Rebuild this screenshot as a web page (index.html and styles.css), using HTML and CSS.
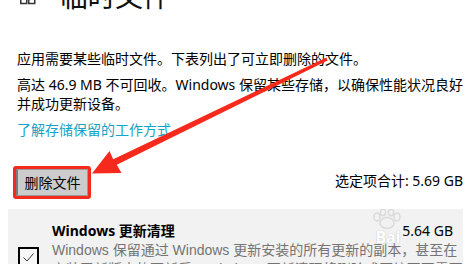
FILE: index.html
```html
<!DOCTYPE html>
<html lang="zh-CN">
<head>
<meta charset="utf-8">
<title>临时文件</title>
<link rel="stylesheet" href="styles.css">
</head>
<body>
<div class="page">
  <div class="header">
    <svg class="hicon" width="16" height="10" viewBox="0 0 16 10"><rect x="0.75" y="-4" width="6" height="7.5" fill="none" stroke="#333" stroke-width="1.5"/><rect x="8.75" y="-4" width="6" height="7.5" fill="none" stroke="#333" stroke-width="1.5"/></svg>
    <h1 class="title">临时文件</h1>
  </div>
  <p class="text t1">应用需要某些临时文件。下表列出了可立即删除的文件。</p>
  <p class="text t2">高达 46.9 MB 不可回收。Windows 保留某些存储，以确保性能状况良好并成功更新设备。</p>
  <a class="link">了解存储保留的工作方式</a>
  <div class="actions">
    <div class="btn-frame"><button class="btn">删除文件</button></div>
    <div class="total">选定项合计: 5.69 GB</div>
  </div>
  <div class="panel">
    <div class="check"><svg width="17" height="17" viewBox="0 0 17 17"><path d="M3.5 8.5 L7 12 L13.5 4.5" fill="none" stroke="#333" stroke-width="1"/></svg></div>
    <div class="item">
      <div class="item-head"><span class="item-title">Windows 更新清理</span><span class="item-size">5.64 GB</span></div>
      <div class="item-desc">Windows 保留通过 Windows 更新安装的所有更新的副本，甚至在安装了新版本的更新后。Windows 更新清理将删除或压缩不再需要的旧版本更新。</div>
    </div>
    <div class="watermark">
      <svg width="50" height="22" viewBox="0 0 50 22"><g fill="none" stroke="#dadada" stroke-width="1.5"><ellipse cx="24" cy="14" rx="7" ry="5.5"/><ellipse cx="14" cy="8" rx="3" ry="4"/><ellipse cx="20" cy="3.5" rx="2.6" ry="3.2"/><ellipse cx="28" cy="3.5" rx="2.6" ry="3.2"/><ellipse cx="34" cy="8" rx="3" ry="4"/></g></svg>
      <span class="wm-text">Bai</span>
    </div>
  </div>
  <svg class="arrow" width="473" height="264" viewBox="0 0 473 264"><polygon points="326.4,57.4 113.2,159.3 109.5,151 92,173.5 121.5,173 116.8,164.7 327.6,60.6" fill="#f52a1c"/></svg>
</div>
</body>
</html>
```
FILE: styles.css
```css
html, body {
  margin: 0;
  padding: 0;
  background: #ffffff;
}
body {
  font-family: "Noto Sans", "Noto Sans CJK SC", sans-serif;
  color: #000;
  overflow: hidden;
  width: 473px;
  height: 264px;
}
.page {
  position: relative;
  padding: 0 10px 0 17px;
  height: 264px;
  box-sizing: border-box;
  overflow: hidden;
}
.header {
  display: flex;
  align-items: flex-start;
  height: 10px;
}
.hicon {
  display: block;
  margin: 0 0 0 3px;
  width: 16px;
  height: 10px;
}
.title {
  margin: -18px 0 0 24px;
  font-size: 28px;
  line-height: 28px;
  font-weight: 400;
  letter-spacing: -0.5px;
  color: #111;
}
.text {
  margin: 0;
  font-size: 14px;
  line-height: 19px;
}
.t1 {
  margin-top: 39px;
}
.t2 {
  margin-top: 7px;
}
.link {
  display: block;
  margin-top: 7px;
  font-size: 14px;
  line-height: 19px;
  color: #16a2c4;
}
.actions {
  display: flex;
  justify-content: space-between;
  align-items: center;
  margin: 27px 0 0 -4px;
}
.btn-frame {
  display: flex;
  border: 3px solid #f52a1c;
  border-radius: 3px;
}
.btn {
  height: 27px;
  width: 72px;
  margin: 0;
  padding: 0;
  background: #cccccc;
  border: 1px solid #9a9a9a;
  border-left: 2px solid #7a7a7a;
  font-family: "Noto Sans", "Noto Sans CJK SC", sans-serif;
  font-size: 14px;
  line-height: 19px;
  color: #000;
}
.total {
  font-size: 14px;
  line-height: 19px;
  margin-bottom: 4px;
}
.panel {
  position: relative;
  display: flex;
  align-items: flex-start;
  margin: 10px 0 0 -9px;
  padding: 12px 10px 0 10px;
  background: #f2f2f2;
  height: 43px;
  overflow: hidden;
}
.check {
  flex: none;
  width: 17px;
  height: 17px;
  margin-top: 26px;
  border: 2px solid #000;
  background: #f7f7f7;
}
.check svg {
  display: block;
}
.item {
  flex: 1;
  margin-left: 13px;
  min-width: 0;
}
.item-head {
  display: flex;
  justify-content: space-between;
  font-size: 14px;
  line-height: 19px;
}
.item-title {
  font-weight: 700;
}
.item-desc {
  margin-top: 1px;
  margin-right: -12px;
  font-family: "Liberation Sans", "Noto Sans CJK SC", sans-serif;
  font-size: 14px;
  line-height: 19px;
  color: #747474;
}
.watermark {
  position: absolute;
  left: 350px;
  top: 0;
  width: 60px;
  display: flex;
  flex-direction: column;
  align-items: center;
  pointer-events: none;
}
.wm-text {
  margin-top: -2px;
  font-size: 16px;
  line-height: 17px;
  font-weight: 700;
  color: #ffffff;
  text-shadow: 0 0 1px #c4c4c4, 0 0 1px #c4c4c4;
}
.arrow {
  position: absolute;
  left: 0;
  top: 0;
  pointer-events: none;
}
```
